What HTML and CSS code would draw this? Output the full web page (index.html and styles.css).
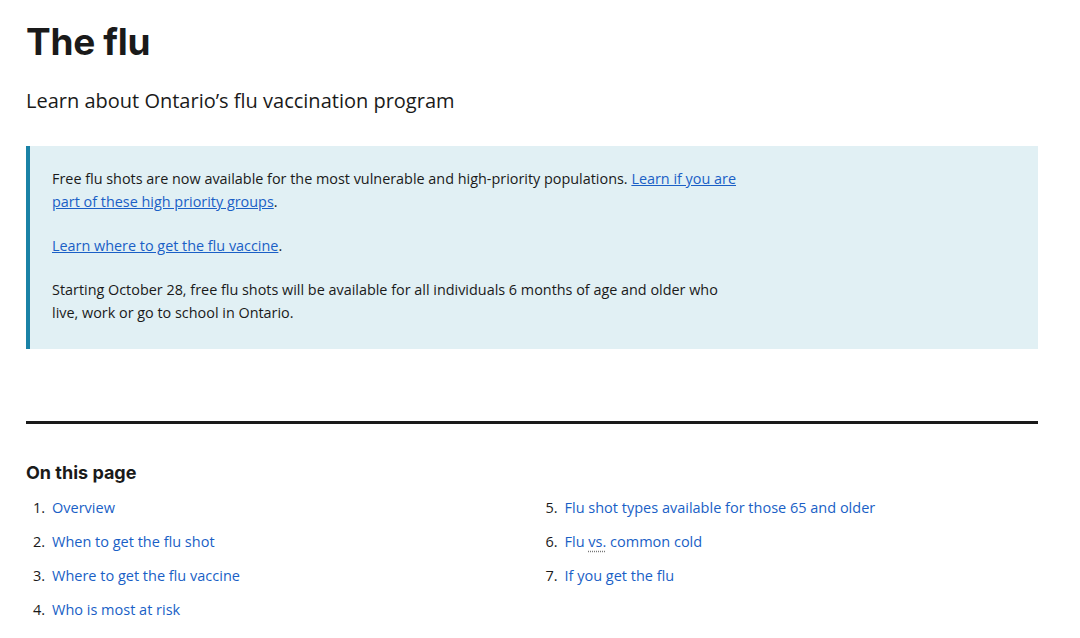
FILE: index.html
```html
<!DOCTYPE html>
<html lang="en">
<head>
<meta charset="utf-8">
<title>The flu</title>
<link rel="stylesheet" href="styles.css">
</head>
<body>
<main class="page">
  <h1 class="title">The flu</h1>
  <p class="lead">Learn about Ontario’s flu vaccination program</p>
  <div class="callout">
    <p>Free flu shots are now available for the most vulnerable and high-priority populations. <a href="#">Learn if you are part of these high priority groups</a>.</p>
    <p><a href="#">Learn where to get the flu vaccine</a>.</p>
    <p>Starting October 28, free flu shots will be available for all individuals 6 months of age and older who live, work or go to school in Ontario.</p>
  </div>
  <hr class="rule">
  <h2 class="toc-title">On this page</h2>
  <ol class="toc">
    <li><a href="#">Overview</a></li>
    <li><a href="#">When to get the flu shot</a></li>
    <li><a href="#">Where to get the flu vaccine</a></li>
    <li><a href="#">Who is most at risk</a></li>
    <li><a href="#">Flu shot types available for those 65 and older</a></li>
    <li><a href="#">Flu <abbr title="versus">vs.</abbr> common cold</a></li>
    <li><a href="#">If you get the flu</a></li>
  </ol>
</main>
</body>
</html>
```
FILE: styles.css
```css
html, body {
  margin: 0;
  padding: 0;
  background: #ffffff;
}
body {
  font-family: "Open Sans", "Liberation Sans", sans-serif;
  color: #1a1a1a;
}
.page {
  width: 1012px;
  padding: 0 26px;
}
.title {
  font-family: "Inter", "Open Sans", sans-serif;
  font-weight: 700;
  font-size: 37px;
  letter-spacing: -0.3px;
  line-height: 48px;
  margin: 18px 0 0;
  color: #1a1a1a;
}
.lead {
  font-size: 20px;
  line-height: 28px;
  margin: 21px 0 0;
  color: #1a1a1a;
}
.callout {
  margin-top: 31px;
  background: #e1f0f4;
  border-left: 4px solid #1a82a6;
  padding: 21px 0 25px 22px;
}
.callout p {
  font-size: 14.4px;
  line-height: 23px;
  margin: 0 0 21px;
  max-width: 692px;
}
.callout p:last-child {
  margin-bottom: 0;
}
.callout a {
  color: #1a5fc6;
  text-decoration: underline;
}
.rule {
  border: 0;
  height: 3px;
  background: #1a1a1a;
  margin: 72px 0 0;
}
.toc-title {
  font-family: "Inter", "Open Sans", sans-serif;
  font-weight: 700;
  font-size: 18px;
  line-height: 24px;
  margin: 37px 0 0;
}
.toc {
  list-style: none;
  counter-reset: toc;
  margin: 12px 0 0;
  padding: 0 0 0 7px;
  column-count: 2;
  column-gap: 20px;
  font-size: 14.5px;
}
.toc li {
  counter-increment: toc;
  display: flex;
  line-height: 22px;
  margin-bottom: 12px;
  break-inside: avoid;
}
.toc li::before {
  content: counter(toc) ".";
  width: 19px;
  flex: none;
  color: #1a1a1a;
}
.toc a {
  color: #1a5fc6;
  text-decoration: none;
}
.toc abbr {
  text-decoration: underline dotted #777;
  text-underline-offset: 4px;
}
```
